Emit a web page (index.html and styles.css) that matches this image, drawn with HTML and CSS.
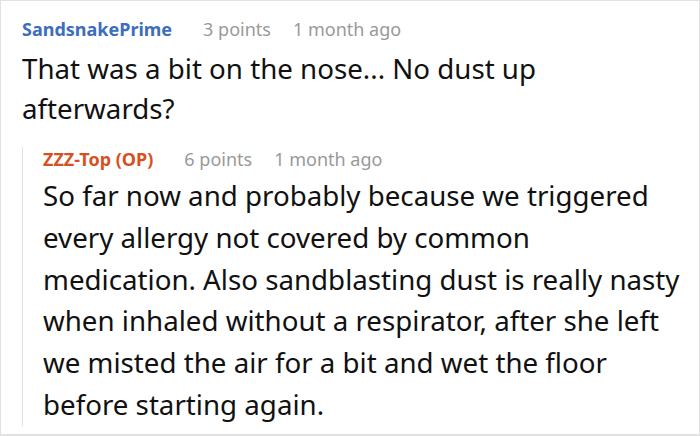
FILE: index.html
```html
<!DOCTYPE html>
<html lang="en">
<head>
<meta charset="utf-8">
<link rel="stylesheet" href="styles.css">
</head>
<body>
<div class="frame">
  <div class="comment">
    <div class="meta">
      <span class="user user-blue">SandsnakePrime</span>
      <span class="points">3 points</span>
      <span class="time">1 month ago</span>
    </div>
    <p class="text text-top">That was a bit on the nose... No dust up afterwards?</p>
    <div class="reply">
      <div class="meta meta-reply">
        <span class="user user-op">ZZZ-Top (OP)</span>
        <span class="points">6 points</span>
        <span class="time">1 month ago</span>
      </div>
      <p class="text text-reply">So far now and probably because we triggered every allergy not covered by common medication. Also sandblasting dust is really nasty when inhaled without a respirator, after she left we misted the air for a bit and wet the floor before starting again.</p>
    </div>
  </div>
</div>
</body>
</html>
```
FILE: styles.css
```css
html, body {
  margin: 0;
  padding: 0;
  background: #ffffff;
}
.frame {
  width: 700px;
  height: 436px;
  box-sizing: border-box;
  border: 1px solid #e2e2e2;
  border-bottom-width: 2px;
  overflow: hidden;
  font-family: "Noto Sans", sans-serif;
  color: #111111;
}
.comment {
  padding: 16px 0 0 21px;
}
.meta {
  display: flex;
  align-items: baseline;
  font-size: 18px;
  line-height: 24px;
  white-space: nowrap;
}
.user {
  font-weight: 700;
  margin-right: 31px;
}
.user-blue { color: #3d6dbd; }
.user-op { color: #d6511f; }
.points {
  color: #999999;
  margin-right: 22px;
}
.time { color: #999999; }
.text {
  margin: 0;
  font-size: 27.7px;
}
.text-top {
  margin-top: 7px;
  line-height: 40px;
  width: 560px;
}
.reply {
  margin-top: 30px;
  border-left: 1px solid #e2e2e2;
  padding-left: 20px;
  width: 640px;
}
.meta-reply {
  margin-top: -11px;
}
.text-reply {
  margin-top: 4px;
  margin-bottom: -8px;
  line-height: 41.8px;
}
```
